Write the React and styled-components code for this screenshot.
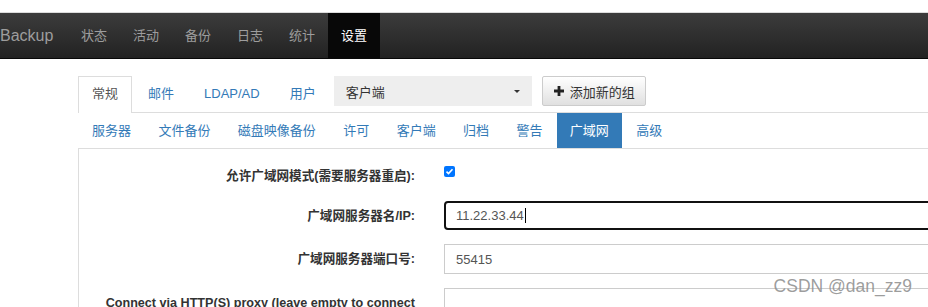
import styled, { createGlobalStyle } from "styled-components";

const GlobalStyle = createGlobalStyle`
  html, body {
    margin: 0;
    padding: 0;
    background: #fff;
    overflow: hidden;
  }
  body {
    font-family: "Liberation Sans", "Noto Sans CJK SC", sans-serif;
    font-size: 13px;
    color: #333;
  }
  #root {
    width: 928px;
    height: 307px;
    overflow: hidden;
    position: relative;
  }
`;

const TopStrip = styled.div`
  height: 12px;
  border-bottom: 1px solid #dcdcdc;
  background: #fff;
`;

const Navbar = styled.nav`
  display: flex;
  height: 45px;
  background: linear-gradient(to bottom, #3c3c3c 0%, #222 100%);
  border-bottom: 1px solid #080808;
`;

const Brand = styled.div`
  width: 68px;
  font-size: 16px;
  line-height: 45px;
  color: #9d9d9d;
`;

const NavItem = styled.div`
  padding: 0 13px;
  line-height: 45px;
  font-size: 13px;
  color: ${(p) => (p.$active ? "#fff" : "#9d9d9d")};
  background: ${(p) => (p.$active ? "#080808" : "transparent")};
`;

const Main = styled.div`
  width: 1100px;
  margin: 17px 0 0 78px;
`;

const TabBar = styled.div`
  display: flex;
  align-items: flex-start;
  height: 36px;
  border-bottom: 1px solid #ddd;
`;

const Tab = styled.div`
  box-sizing: border-box;
  height: ${(p) => (p.$active ? "37px" : "36px")};
  padding: 0 13px;
  margin-right: 2px;
  line-height: 34px;
  font-size: 13px;
  color: ${(p) => (p.$active ? "#555" : "#337ab7")};
  background: #fff;
  border: 1px solid ${(p) => (p.$active ? "#ddd" : "transparent")};
  border-bottom: none;
`;

const Select = styled.div`
  box-sizing: border-box;
  display: flex;
  align-items: center;
  justify-content: space-between;
  width: 198px;
  height: 30px;
  margin-left: 2px;
  padding: 0 12px;
  background: #eee;
  color: #333;
  font-size: 13px;
`;

const Caret = styled.span`
  width: 0;
  height: 0;
  border-left: 3.5px solid transparent;
  border-right: 3.5px solid transparent;
  border-top: 3.5px solid #333;
`;

const AddButton = styled.div`
  box-sizing: border-box;
  display: flex;
  align-items: center;
  gap: 6px;
  height: 30px;
  margin-left: 10px;
  padding: 0 10px 0 11px;
  border: 1px solid #ccc;
  border-radius: 2px;
  background: linear-gradient(to bottom, #fff 0%, #e0e0e0 100%);
  color: #333;
  font-size: 13px;
`;

const PillBar = styled.div`
  display: flex;
  gap: 1.4px;
  padding-left: 1px;
  height: 35px;
`;

const Pill = styled.div`
  padding: 0 13px;
  line-height: 35px;
  font-size: 13px;
  color: ${(p) => (p.$active ? "#fff" : "#337ab7")};
  background: ${(p) => (p.$active ? "#337ab7" : "transparent")};
`;

const Panel = styled.div`
  border-top: 1px solid #ddd;
  border-left: 1px solid #ddd;
  padding-top: 17px;
  height: 200px;
`;

const FormRow = styled.div`
  display: grid;
  grid-template-columns: 336px 1fr;
  column-gap: 29px;
  align-items: ${(p) => (p.$top ? "start" : "center")};
  margin-bottom: ${(p) => p.$gap || 14}px;
`;

const Label = styled.label`
  text-align: right;
  font-weight: bold;
  font-size: 12.6px;
  line-height: 20px;
  color: #333;
  padding-top: ${(p) => (p.$pad ? "5px" : "0")};
`;

const CheckBox = styled.span`
  display: flex;
  align-items: center;
  justify-content: center;
  width: 11px;
  height: 11px;
  border-radius: 2px;
  background: #0075ff;
`;

const Input = styled.div`
  box-sizing: border-box;
  display: flex;
  align-items: center;
  height: ${(p) => (p.$focused ? "29px" : "30px")};
  padding-left: ${(p) => (p.$focused ? "10px" : "11px")};
  border: ${(p) => (p.$focused ? "2px solid #111" : "1px solid #ccc")};
  border-radius: ${(p) => (p.$focused ? "4px" : "0")};
  font-size: 13px;
  color: #555;
`;

const TextCaret = styled.span`
  width: 1px;
  height: 15px;
  margin-left: 1px;
  background: #000;
`;

const Watermark = styled.div`
  position: absolute;
  right: 16px;
  top: 276px;
  font-size: 17.5px;
  color: rgba(140, 140, 140, 0.85);
`;

const navItems = ["状态", "活动", "备份", "日志", "统计", "设置"];
const tabs = ["常规", "邮件", "LDAP/AD", "用户"];
const pills = ["服务器", "文件备份", "磁盘映像备份", "许可", "客户端", "归档", "警告", "广域网", "高级"];

export default function App() {
    return (
        <>
            <GlobalStyle />
            <TopStrip />
            <Navbar>
                <Brand>Backup</Brand>
                {navItems.map((n) => (
                    <NavItem key={n} $active={n === "设置"}>{n}</NavItem>
                ))}
            </Navbar>
            <Main>
                <TabBar>
                    {tabs.map((t) => (
                        <Tab key={t} $active={t === "常规"}>{t}</Tab>
                    ))}
                    <Select>
                        <span>客户端</span>
                        <Caret />
                    </Select>
                    <AddButton>
                        <svg width="10" height="10" viewBox="0 0 10 10">
                            <path d="M3.6 0h2.8v3.6H10v2.8H6.4V10H3.6V6.4H0V3.6h3.6z" fill="#222" />
                        </svg>
                        添加新的组
                    </AddButton>
                </TabBar>
                <PillBar>
                    {pills.map((p) => (
                        <Pill key={p} $active={p === "广域网"}>{p}</Pill>
                    ))}
                </PillBar>
                <Panel>
                    <FormRow $top $gap={15}>
                        <Label>允许广域网模式(需要服务器重启):</Label>
                        <CheckBox>
                            <svg width="9" height="9" viewBox="0 0 9 9">
                                <path d="M1.5 4.6l2 2 4-4.4" stroke="#fff" strokeWidth="1.6" fill="none" />
                            </svg>
                        </CheckBox>
                    </FormRow>
                    <FormRow>
                        <Label>广域网服务器名/IP:</Label>
                        <Input $focused>
                            11.22.33.44<TextCaret />
                        </Input>
                    </FormRow>
                    <FormRow>
                        <Label>广域网服务器端口号:</Label>
                        <Input>55415</Input>
                    </FormRow>
                    <FormRow $top>
                        <Label $pad>Connect via HTTP(S) proxy (leave empty to connect directly):</Label>
                        <Input />
                    </FormRow>
                </Panel>
            </Main>
            <Watermark>CSDN @dan_zz9</Watermark>
        </>
    );
}
